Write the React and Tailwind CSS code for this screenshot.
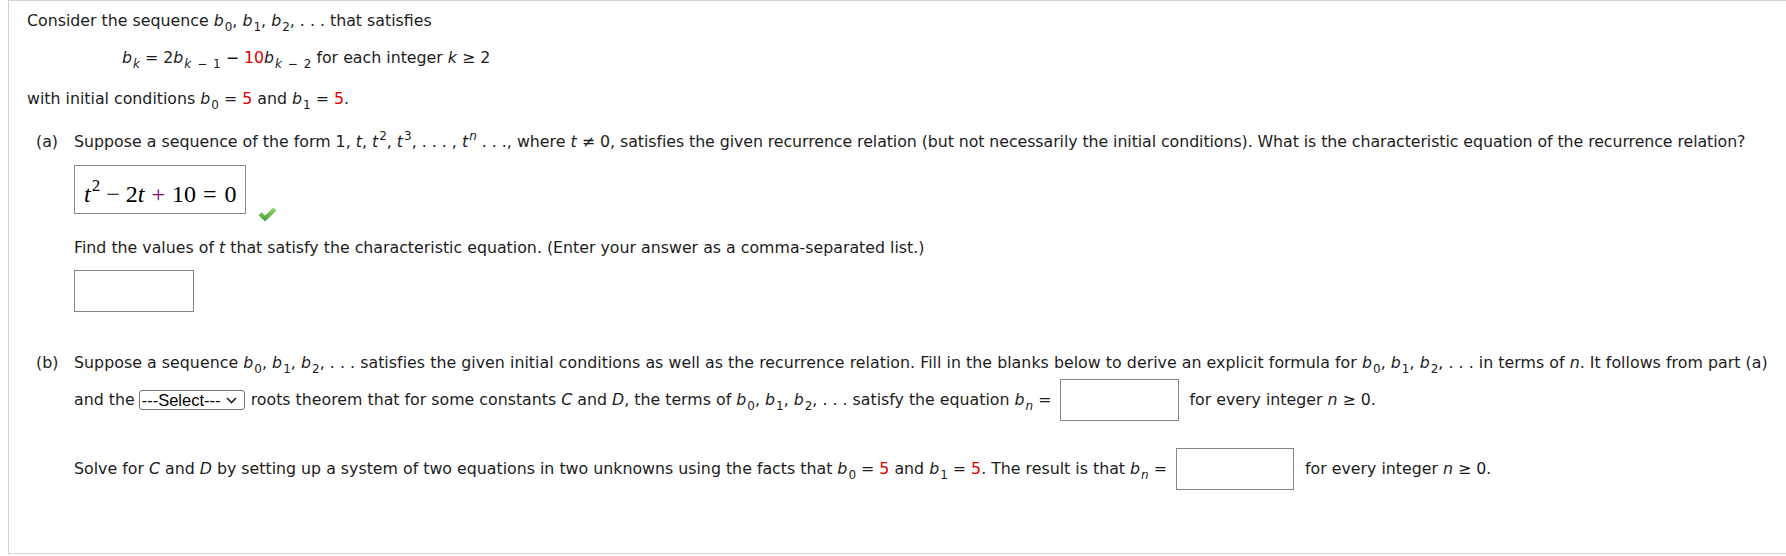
import React from "react";

const FONT = "font-['DejaVu_Sans',sans-serif]";

function I({ children }) {
  return <i className="italic">{children}</i>;
}

function Sub({ children }) {
  return <span className="text-[12px] leading-none align-[-5px] ml-[1px]">{children}</span>;
}

function Sup({ children }) {
  return <span className="text-[12px] leading-none align-[7px] ml-[1px]">{children}</span>;
}

function Bs({ s }) {
  return (
    <>
      <I>b</I>
      <Sub>{s}</Sub>
    </>
  );
}

function Seq() {
  return (
    <>
      <Bs s="0" />, <Bs s="1" />, <Bs s="2" />, . . .
    </>
  );
}

function Red({ children }) {
  return <span className="text-[#e00000]">{children}</span>;
}

function Check() {
  return (
    <svg width="19" height="15" viewBox="0 0 19 15" className="block">
      <defs>
        <linearGradient id="gck" x1="0" y1="0" x2="0" y2="1">
          <stop offset="0" stopColor="#9ad97a" />
          <stop offset="1" stopColor="#3e9a34" />
        </linearGradient>
      </defs>
      <path d="M0.5 8.2 L3.6 5.2 L7 8.6 L15.4 0.4 L18.5 3.4 L7 14.6 Z" fill="url(#gck)" />
    </svg>
  );
}

function Box({ w, extra = "" }) {
  return <div className={`h-[42px] border border-[#858585] bg-white shrink-0 ${w} ${extra}`} />;
}

function SelectBox() {
  return (
    <div className="ml-[4px] w-[106px] h-[20px] border border-[#767676] rounded-[3px] bg-white flex items-center pl-[2px] font-['Liberation_Sans',sans-serif] text-[16.5px] leading-none text-black shrink-0">
      <span>---Select---</span>
      <svg width="11" height="7" viewBox="0 0 11 7" className="block ml-[5px]">
        <path d="M1 1 L5.5 5.5 L10 1" fill="none" stroke="#222" strokeWidth="1.6" />
      </svg>
    </div>
  );
}

export default function App() {
  return (
    <div className={`w-[1786px] h-[556px] bg-white text-[#1c1c1c] ${FONT} text-[15.8px]`}>
      <div className="ml-[8px] h-[554px] border-l border-t border-b border-[#d4d4d4] pl-[18px] whitespace-nowrap">
        <div className="h-[40px] flex items-center">
          <span>
            Consider the sequence <Seq /> that satisfies
          </span>
        </div>
        <div className="h-[34px] flex items-center pl-[95px]">
          <span>
            <I>b</I>
            <Sub>
              <I>k</I>
            </Sub>{" "}
            = 2<I>b</I>
            <Sub>
              <I>k</I>
              <span className="mx-[2px]"> − </span>1
            </Sub>{" "}
            − <Red>10</Red>
            <I>b</I>
            <Sub>
              <I>k</I>
              <span className="mx-[2px]"> − </span>2
            </Sub>{" "}
            for each integer <I>k</I> ≥ 2
          </span>
        </div>
        <div className="h-[48px] flex items-center">
          <span>
            with initial conditions <Bs s="0" /> = <Red>5</Red> and <Bs s="1" /> = <Red>5</Red>.
          </span>
        </div>

        <div className="flex pl-[9px]">
          <div className="w-[38px] h-[38px] flex items-center shrink-0">(a)</div>
          <div className="flex flex-col">
            <div className="h-[38px] flex items-center">
              <span>
                Suppose a sequence of the form 1, <I>t</I>, <I>t</I>
                <Sup>2</Sup>, <I>t</I>
                <Sup>3</Sup>, . . . , <I>t</I>
                <Sup>
                  <I>n</I>
                </Sup>{" "}
                . . ., where <I>t</I> ≠ 0,{" "}
                <span className="tracking-[-0.07px]">
                  satisfies the given recurrence relation (but not necessarily the initial conditions). What is
                  the characteristic equation of the recurrence relation?
                </span>
              </span>
            </div>
            <div className="mt-[4px] h-[49px] flex items-start">
              <div className="w-[172px] h-[49px] border border-[#8c8c8c] flex items-center pl-[9px] pt-[4px] font-['Liberation_Serif',serif] text-[24px] text-black leading-none">
                <span>
                  <i>t</i>
                  <span className="text-[17px] align-[11px] ml-[1px]">2</span>
                  <span className="ml-[6px]">−</span>
                  <span className="ml-[6px]">2</span>
                  <i>t</i>
                  <span className="ml-[7px] text-[#800080]">+</span>
                  <span className="ml-[7px]">10</span>
                  <span className="ml-[7px]">=</span>
                  <span className="ml-[8px]">0</span>
                </span>
              </div>
              <div className="ml-[12px] mt-[42px]">
                <Check />
              </div>
            </div>
            <div className="mt-[16px] h-[36px] flex items-center">
              <span>
                Find the values of <I>t</I> that satisfy the characteristic equation. (Enter your answer as a
                comma-separated list.)
              </span>
            </div>
            <Box w="w-[120px]" extra="mt-[4px]" />
          </div>
        </div>

        <div className="flex pl-[9px] mt-[36px]">
          <div className="w-[38px] h-[30px] flex items-center shrink-0">(b)</div>
          <div className="flex flex-col">
            <div className="h-[30px] flex items-center">
              <span className="tracking-[0.035px]">
                Suppose a sequence <Seq /> satisfies the given initial conditions as well as the recurrence
                relation. Fill in the blanks below to derive an explicit formula for <Seq /> in terms of{" "}
                <I>n</I>. It follows from part (a)
              </span>
            </div>
            <div className="mt-[1px] h-[42px] flex items-center">
              <span>and the</span>
              <SelectBox />
              <span className="ml-[6px]">
                roots theorem that for some constants <I>C</I> and <I>D</I>, the terms of <Seq /> satisfy the
                equation <I>b</I>
                <Sub>
                  <I>n</I>
                </Sub>{" "}
                =
              </span>
              <Box w="w-[119px]" extra="ml-[8px]" />
              <span className="ml-[11px]">
                for every integer <I>n</I> ≥ 0.
              </span>
            </div>
            <div className="mt-[27px] h-[42px] flex items-center">
              <span>
                Solve for <I>C</I> and <I>D</I> by setting up a system of two equations in two unknowns using
                the facts that <Bs s="0" /> = <Red>5</Red> and <Bs s="1" /> = <Red>5</Red>. The result is that{" "}
                <I>b</I>
                <Sub>
                  <I>n</I>
                </Sub>{" "}
                =
              </span>
              <Box w="w-[118px]" extra="ml-[9px]" />
              <span className="ml-[11px]">
                for every integer <I>n</I> ≥ 0.
              </span>
            </div>
          </div>
        </div>
      </div>
    </div>
  );
}
